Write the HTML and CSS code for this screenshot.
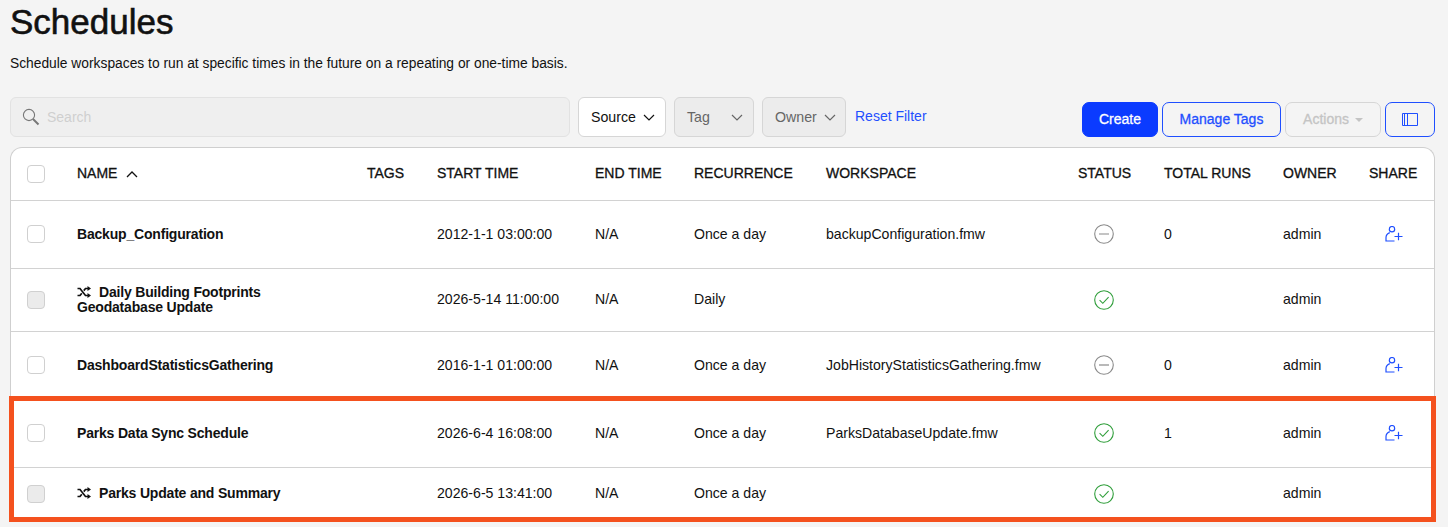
FILE: index.html
```html
<!DOCTYPE html>
<html lang="en">
<head>
    <meta charset="UTF-8">
    <title>Schedules</title>
    <link rel="stylesheet" href="styles.css">
</head>
<body>
<svg class="defs" width="0" height="0">
    <symbol id="i-shuffle" viewBox="0 0 14 12">
        <path d="M0.5 2.5H3L8.5 9.5H11M0.5 9.5H3L4.8 7.2M6.8 4.6L8.5 2.5H11" fill="none" stroke="currentColor" stroke-width="1.7"/>
        <path d="M10.5 0L14 2.5L10.5 5ZM10.5 7L14 9.5L10.5 12Z" fill="currentColor"/>
    </symbol>
    <symbol id="i-ok" viewBox="0 0 20 20">
        <circle cx="10" cy="10" r="9.3" fill="none" stroke="#2f9e3a" stroke-width="1.1"/>
        <path d="M5.6 10.2L8.8 13.3L14.6 7.2" fill="none" stroke="#2f9e3a" stroke-width="1.1"/>
    </symbol>
    <symbol id="i-off" viewBox="0 0 20 20">
        <circle cx="10" cy="10" r="9.3" fill="none" stroke="#8a8a8a" stroke-width="1.1"/>
        <path d="M5 10H15" fill="none" stroke="#8a8a8a" stroke-width="1.2"/>
    </symbol>
    <symbol id="i-share" viewBox="0 0 18 16">
        <circle cx="7" cy="3.2" r="2.7" fill="none" stroke="#1f4fff" stroke-width="1.2"/>
        <path d="M9.5 15H1V11.5C1 9 2.6 7.6 4.8 6.6" fill="none" stroke="#1f4fff" stroke-width="1.2"/>
        <path d="M9.5 10.5H17.5M13.5 6.8V14.2" fill="none" stroke="#1f4fff" stroke-width="1.2"/>
    </symbol>
</svg>

<div class="page">
    <h1 class="title">Schedules</h1>
    <p class="intro">Schedule workspaces to run at specific times in the future on a repeating or one-time basis.</p>

    <div class="toolbar">
        <div class="search">
            <svg width="18" height="18" viewBox="0 0 18 18">
                <circle cx="7" cy="7" r="5.6" fill="none" stroke="#777" stroke-width="1.1"/>
                <path d="M11 11L16.5 16.5" fill="none" stroke="#777" stroke-width="2"/>
            </svg>
            <span>Search</span>
        </div>
        <div class="select select-source">Source <svg class="chev" width="12" height="7" viewBox="0 0 12 7"><path d="M1 1L6 6L11 1" fill="none" stroke="currentColor" stroke-width="1.2"/></svg></div>
        <div class="select select-tag disabled">Tag <svg class="chev" width="12" height="7" viewBox="0 0 12 7"><path d="M1 1L6 6L11 1" fill="none" stroke="currentColor" stroke-width="1.2"/></svg></div>
        <div class="select select-owner disabled">Owner <svg class="chev" width="12" height="7" viewBox="0 0 12 7"><path d="M1 1L6 6L11 1" fill="none" stroke="currentColor" stroke-width="1.2"/></svg></div>
        <a class="reset" href="#">Reset Filter</a>
        <div class="actions">
            <button class="btn btn-primary btn-create">Create</button>
            <button class="btn btn-outline btn-tags">Manage Tags</button>
            <button class="btn btn-disabled btn-actions">Actions <span class="caret"></span></button>
            <button class="btn btn-outline btn-cols">
                <svg width="16" height="13" viewBox="0 0 16 13"><path d="M0.5 0.5H15.5V12.5H0.5ZM2.5 0.5V12.5M5.5 0.5V12.5" fill="none" stroke="#1f4fff" stroke-width="1"/></svg>
            </button>
        </div>
    </div>

    <div class="table-wrap">
        <table class="grid">
            <colgroup>
                <col class="c-check"><col class="c-name"><col class="c-tags"><col class="c-start"><col class="c-end">
                <col class="c-rec"><col class="c-ws"><col class="c-status"><col class="c-runs"><col class="c-owner"><col class="c-share">
            </colgroup>
            <thead>
            <tr>
                <th><span class="check"></span></th>
                <th>NAME <svg class="sort" width="12" height="7" viewBox="0 0 12 7"><path d="M1 6L6 1L11 6" fill="none" stroke="#111" stroke-width="1.3"/></svg></th>
                <th>TAGS</th>
                <th>START TIME</th>
                <th>END TIME</th>
                <th>RECURRENCE</th>
                <th>WORKSPACE</th>
                <th>STATUS</th>
                <th>TOTAL RUNS</th>
                <th>OWNER</th>
                <th>SHARE</th>
            </tr>
            </thead>
            <tbody>
            <tr class="row-a">
                <td><span class="check"></span></td>
                <td class="name">Backup_Configuration</td>
                <td></td>
                <td>2012-1-1 03:00:00</td>
                <td>N/A</td>
                <td>Once a day</td>
                <td>backupConfiguration.fmw</td>
                <td><svg class="status"><use href="#i-off"/></svg></td>
                <td>0</td>
                <td>admin</td>
                <td><svg class="share"><use href="#i-share"/></svg></td>
            </tr>
            <tr class="row-b">
                <td><span class="check disabled"></span></td>
                <td class="name"><div class="wrap"><svg class="shuffle"><use href="#i-shuffle"/></svg>Daily Building Footprints Geodatabase Update</div></td>
                <td></td>
                <td>2026-5-14 11:00:00</td>
                <td>N/A</td>
                <td>Daily</td>
                <td></td>
                <td><svg class="status"><use href="#i-ok"/></svg></td>
                <td></td>
                <td>admin</td>
                <td></td>
            </tr>
            <tr class="row-a">
                <td><span class="check"></span></td>
                <td class="name">DashboardStatisticsGathering</td>
                <td></td>
                <td>2016-1-1 01:00:00</td>
                <td>N/A</td>
                <td>Once a day</td>
                <td>JobHistoryStatisticsGathering.fmw</td>
                <td><svg class="status"><use href="#i-off"/></svg></td>
                <td>0</td>
                <td>admin</td>
                <td><svg class="share"><use href="#i-share"/></svg></td>
            </tr>
            <tr class="row-a">
                <td><span class="check"></span></td>
                <td class="name">Parks Data Sync Schedule</td>
                <td></td>
                <td>2026-6-4 16:08:00</td>
                <td>N/A</td>
                <td>Once a day</td>
                <td>ParksDatabaseUpdate.fmw</td>
                <td><svg class="status"><use href="#i-ok"/></svg></td>
                <td>1</td>
                <td>admin</td>
                <td><svg class="share"><use href="#i-share"/></svg></td>
            </tr>
            <tr class="row-c">
                <td><span class="check disabled"></span></td>
                <td class="name"><svg class="shuffle"><use href="#i-shuffle"/></svg>Parks Update and Summary</td>
                <td></td>
                <td>2026-6-5 13:41:00</td>
                <td>N/A</td>
                <td>Once a day</td>
                <td></td>
                <td><svg class="status"><use href="#i-ok"/></svg></td>
                <td></td>
                <td>admin</td>
                <td></td>
            </tr>
            </tbody>
        </table>
    </div>
    <div class="highlight"></div>
</div>
</body>
</html>
```

FILE: styles.css
```css
html, body {
    margin: 0;
    height: 100%;
    overflow: hidden;
}

body {
    background-color: #f4f4f4;
    color: #111;
    font-family: "Liberation Sans", Arial, sans-serif;
    font-size: 14px;
}

.defs {
    display: block;
    height: 0;
}

.page {
    position: relative;
    height: 527px;
    overflow: hidden;
    padding: 0 13px 0 10px;
    box-sizing: border-box;
}

.title {
    margin: 0;
    padding-top: 1px;
    font-size: 35px;
    line-height: 42px;
    font-weight: 400;
    -webkit-text-stroke: 0.6px #111;
}

.intro {
    margin: 12px 0 0;
    font-size: 13.8px;
    line-height: 18px;
}

.toolbar {
    display: flex;
    align-items: flex-start;
    margin-top: 24px;
    height: 50px;
}

.search {
    display: flex;
    align-items: center;
    gap: 7px;
    width: 560px;
    height: 40px;
    padding-left: 11px;
    box-sizing: border-box;
    background-color: #efefef;
    border: 1px solid #e2e2e2;
    border-radius: 6px;
    color: #cfcfcf;
}

.select {
    display: flex;
    align-items: center;
    justify-content: space-between;
    height: 40px;
    margin-left: 8px;
    padding: 0 10px 0 12px;
    box-sizing: border-box;
    background-color: #fff;
    border: 1px solid #d6d6d6;
    border-radius: 6px;
    font-size: 14.2px;
}

.select.disabled {
    background-color: #ececec;
    color: #666;
}

.select-source {
    width: 88px;
}

.select-tag {
    width: 80px;
}

.select-owner {
    width: 84px;
    padding-right: 9px;
}

.reset {
    margin: 11px 0 0 9px;
    color: #1f4fff;
    text-decoration: none;
}

.actions {
    display: flex;
    gap: 4px;
    margin-left: auto;
    margin-top: 5px;
}

.btn {
    height: 35px;
    padding: 0 0 2px;
    border-radius: 7px;
    font-family: inherit;
    font-size: 14px;
    font-weight: 400;
    -webkit-text-stroke: 0.3px currentColor;
    box-sizing: border-box;
}

.btn-primary {
    background-color: #0b3bff;
    border: 1px solid #0b3bff;
    color: #fff;
}

.btn-outline {
    background-color: transparent;
    border: 1px solid #1f4fff;
    color: #1f4fff;
}

.btn-disabled {
    background-color: transparent;
    border: 1px solid #d6d6d6;
    color: #c4c4c4;
}

.btn-create {
    width: 76px;
}

.btn-tags {
    width: 119px;
}

.btn-actions {
    width: 96px;
}

.btn-cols {
    width: 50px;
    padding: 3px 0 0;
}

.caret {
    display: inline-block;
    margin-left: 2px;
    vertical-align: 2px;
    border-left: 4px solid transparent;
    border-right: 4px solid transparent;
    border-top: 4px solid #c4c4c4;
}

.table-wrap {
    background-color: #fff;
    border: 1px solid #cfcfcf;
    border-bottom: 0;
    border-radius: 12px 12px 0 0;
    overflow: hidden;
}

.grid {
    width: 100%;
    border-collapse: collapse;
    table-layout: fixed;
}

.c-check { width: 66px; }
.c-name { width: 290px; }
.c-tags { width: 70px; }
.c-start { width: 158px; }
.c-end { width: 99px; }
.c-rec { width: 132px; }
.c-ws { width: 252px; }
.c-status { width: 86px; }
.c-runs { width: 119px; }
.c-owner { width: 86px; }

.grid th {
    height: 49px;
    padding: 0 0 3px;
    text-align: left;
    font-size: 14px;
    font-weight: 400;
    -webkit-text-stroke: 0.3px #111;
    border-bottom: 1px solid #d2d2d2;
    white-space: nowrap;
}

.grid th:first-child {
    padding-bottom: 0;
}

.grid td {
    padding: 0 0 2px;
    border-bottom: 1px solid #d2d2d2;
    white-space: nowrap;
    font-size: 14.1px;
}

.row-a td {
    height: 65px;
}

.row-b td {
    height: 60px;
}

.row-c td {
    height: 50px;
}

.grid .name {
    font-size: 14px;
    font-weight: 700;
    letter-spacing: -0.19px;
}

.wrap {
    width: 200px;
    margin-top: 2px;
    white-space: normal;
    line-height: 15px;
}

.check {
    display: block;
    width: 18px;
    height: 18px;
    margin-left: 16px;
    box-sizing: border-box;
    background-color: #fff;
    border: 1px solid #d0d0d0;
    border-radius: 4px;
}

.check.disabled {
    background-color: #ebebeb;
    margin-top: 2px;
}

.sort {
    margin-left: 5px;
}

.shuffle {
    width: 14px;
    height: 12px;
    margin-right: 8px;
    vertical-align: -1px;
}

.status {
    display: block;
    width: 20px;
    height: 20px;
    margin-left: 16px;
}

.row-b .status,
.row-c .status {
    margin-top: 2px;
}

.share {
    display: block;
    width: 18px;
    height: 16px;
    margin-left: 16px;
}

.highlight {
    position: absolute;
    left: 9px;
    top: 396px;
    width: 1417px;
    height: 116px;
    border: 5px solid #f4511e;
}
```
